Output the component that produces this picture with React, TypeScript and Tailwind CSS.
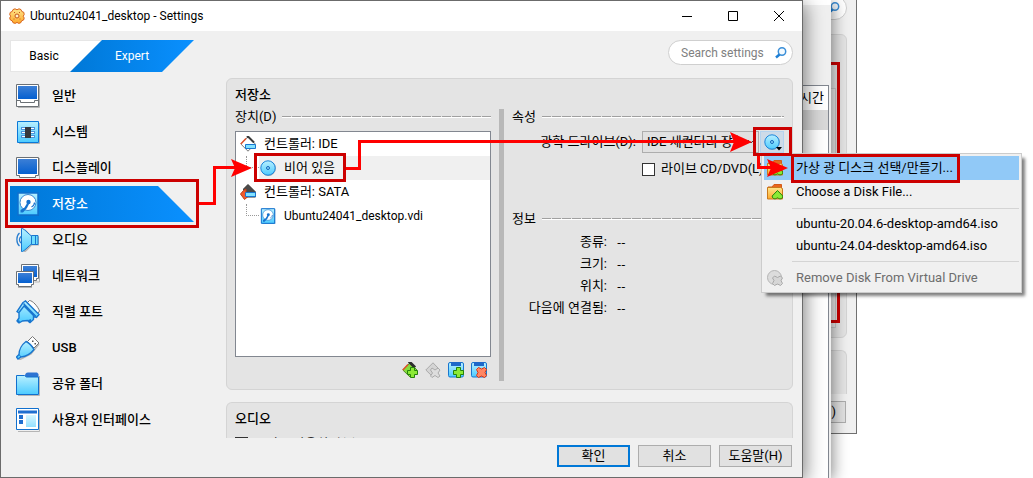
import type { ReactNode } from 'react';

const sideItems = [
  { label: '일반', icon: <MonitorIcon stand /> },
  { label: '시스템', icon: <ChipIcon /> },
  { label: '디스플레이', icon: <MonitorIcon /> },
  { label: '저장소', icon: <DiskIcon />, active: true },
  { label: '오디오', icon: <SpeakerIcon /> },
  { label: '네트워크', icon: <NetworkIcon /> },
  { label: '직렬 포트', icon: <SerialIcon /> },
  { label: 'USB', icon: <UsbIcon /> },
  { label: '공유 폴더', icon: <FolderIcon /> },
  { label: '사용자 인터페이스', icon: <LayoutIcon /> },
];

const info = ['종류:', '크기:', '위치:', '다음에 연결됨:'];

function Svg({ size = 24, children }: { size?: number; children: ReactNode }) {
  return (
    <svg width={size} height={size} viewBox={`0 0 ${size} ${size}`} fill="none" className="shrink-0" aria-hidden="true">
      {children}
    </svg>
  );
}

/* Sidebar icons, 24px */

function MonitorIcon({ stand }: { stand?: boolean }) {
  return (
    <Svg>
      <path d="M2 23.500h21.500V2" stroke="#b5b5b5" />
      {stand ? (
        <>
          <path d="M.5.5h22v22H.5z" fill="#fff" stroke="#6b7075" />
          <path d="M.5 16.500h4v2h14v-2h4" stroke="#6b7075" />
          <path d="M2 2h19v13H2z" fill="url(#screen)" />
        </>
      ) : (
        <>
          <path d="M.5 1.500h22v18h-3v2h-16v-2h-3z" fill="#fff" stroke="#6b7075" />
          <path d="M2 3h19v15H2z" fill="url(#screen)" />
        </>
      )}
    </Svg>
  );
}

function ChipIcon() {
  return (
    <Svg>
      <path d="M3 23.500h20.500V3" stroke="#b5b5b5" />
      <path d="M1.500 1.500h21v21h-21z" fill="url(#sky)" stroke="#0a78d8" />
      <path d="M5 7h4v3H5zM5 11h4v3H5zM5 15h4v3H5zM15 7h4v3h-4zM15 11h4v3h-4zM15 15h4v3h-4z" fill="#4a94dc" />
      <path d="M6 8h3v1H6zM6 12h3v1H6zM6 16h3v1H6zM15 8h3v1h-3zM15 12h3v1h-3zM15 16h3v1h-3z" fill="#fff" />
      <path d="M9 7h6v11H9z" fill="#36383c" />
    </Svg>
  );
}

function DiskIcon({ size = 24 }: { size?: number }) {
  return (
    <svg width={size} height={size} viewBox="0 0 24 24" fill="none" className="shrink-0" aria-hidden="true">
      <path d="M4 2h19v22H4z" fill="#0757a8" opacity=".5" />
      <path d="M2 1h20v22H2z" fill="url(#sky)" stroke="#1170ce" strokeWidth="1.500" />
      <circle cx="12" cy="10.500" r="8" fill="#fff" stroke="#3587d2" />
      <path d="M15.500 15c2-1 3-2.500 3-4.500" stroke="#1672cf" strokeWidth="1.200" />
      <circle cx="12.500" cy="10" r="2.200" fill="#1672cf" />
      <path d="m13.500 11-2.500 5-4 4.500H4.500V18l4-2.500 3-5z" fill="#1672cf" />
    </svg>
  );
}

function SpeakerIcon() {
  return (
    <Svg>
      <path d="M3.500 5C0 8 0 15 3.500 18M5 8.500c-2 2-2 4.500 0 6.500" stroke="#2a7fd0" strokeWidth="1.300" />
      <path d="M6.500 1h2c3 2.500 4.500 5.500 6.500 7h7v9h-7c-2 1.500-4 5-6.500 6.500h-2z" transform="translate(1 .5)" fill="#b5b5b5" />
      <path d="M5.500.5h1c3 1.500 6 5.500 9 7.500v8c-3 2-6 6-9 7.500h-1z" fill="url(#sky)" stroke="#1976cf" />
      <path d="M15.500 7.500h6.500v9h-6.500z" fill="#6fdcfc" stroke="#1976cf" />
      <path d="M19.500 8v8" stroke="#1976cf" />
    </Svg>
  );
}

function NetworkIcon() {
  return (
    <Svg>
      <path d="M23.500 3v15h-5M2 23.500h14" stroke="#b5b5b5" />
      <path d="M5.500.5h17v14h-2v2h-13v-2h-2z" fill="#fff" stroke="#6b7075" />
      <path d="M7 2h14v11H7z" fill="url(#screen)" />
      <path d="M.5 7.500h17v13h-2v2h-13v-2h-2z" fill="#fff" stroke="#6b7075" />
      <path d="M2 9h14v10H2z" fill="url(#screen)" />
    </Svg>
  );
}

function SerialIcon() {
  return (
    <Svg>
      <path d="m11 3 2.500-2.500c3 0 8.500 6 10 10.500l-3 4z" fill="#fff" stroke="#777" />
      <path d="M7 2.500 9.500 1 23 14.500l-2.500 3-3-1v3l-3.500 3-2.500-2-5 .5-3.500 2-2-2 2-3L3 13 1 11.500z" fill="url(#sky)" stroke="#1976cf" strokeWidth="1.400" />
      <path d="M7.500 3.500 20 16.500M3 12.500 8 6l10 10" stroke="#1976cf" strokeWidth="1.400" />
      <path d="m1 21 2-1 1 2-2 1zM12 20l3-1v3l-2 1z" fill="#1976cf" />
    </Svg>
  );
}

function UsbIcon() {
  return (
    <Svg>
      <path d="m3 24 12-6 8-10" stroke="#b5b5b5" strokeWidth="1.500" />
      <path d="m11.500 5.500 5-5 6.500 6.500-5 5z" fill="#fff" stroke="#777" />
      <path d="M16 4.500h1.500V6H16zM18.500 7H20v1.500h-1.500z" fill="#555" />
      <path d="M10 5.500c3 1.500 6 4.500 8 8-3 4-8 7-13 7.500l-3 2L.5 21 3 18.500C3 14 6 8.500 10 5.500z" fill="url(#sky)" stroke="#1976cf" strokeWidth="1.400" />
      <path d="m3 18.500 2 2.500" stroke="#1976cf" />
    </Svg>
  );
}

function FolderIcon() {
  return (
    <Svg>
      <path d="M2 23.500h21.500V4" stroke="#b5b5b5" />
      <path d="M9 4c0-2 1-3.500 3-3.500h9L22.500 2v4H9z" fill="#2d74d2" />
      <path d="M.5 3.500h8l2 1.500h12v17.500H.5z" fill="url(#sky)" stroke="#1170ce" />
    </Svg>
  );
}

function LayoutIcon() {
  return (
    <Svg>
      <path d="M2 23.500h21.500V2" stroke="#b5b5b5" />
      <path d="M.5.5h22v21H.5z" fill="#fff" stroke="#1170ce" />
      <path d="M2 2.500h19v3H2zM3 7h4v4H3zM3 12h4v4H3z" fill="#1f6fd0" />
      <path d="M10 7h10v12H10z" fill="url(#sky)" opacity=".6" />
    </Svg>
  );
}

/* Small icons, 16px */

function DiscIcon() {
  return (
    <Svg size={16}>
      <circle cx="8.500" cy="8.500" r="7.400" fill="#a9b0b6" />
      <circle cx="8" cy="8" r="7.200" fill="url(#sky)" stroke="#1a86dc" />
      <circle cx="8" cy="8" r="1.500" fill="#8fdcff" stroke="#1465b8" />
    </Svg>
  );
}

function ControllerIcon({ filled }: { filled?: boolean }) {
  return (
    <Svg size={16}>
      {filled ? (
        <>
          <path d="M8 .5 15.500 8v5H6L3.500 5z" fill="#4a4a4a" stroke="#333" />
          <path d="M3.500 6.500.5 10l4 5.500L8 12.500 6 9V5z" fill="#f25a2b" stroke="#b9401a" />
        </>
      ) : (
        <>
          <path d="M8 .8 15.300 8 8 15.200.8 8z" fill="#fff" stroke="#777" />
          <path d="M.8 8 6 2.500" stroke="#e0502a" strokeWidth="1.500" />
          <path d="m7 1.500 1-1 6 6" stroke="#3a3a3a" strokeWidth="2" />
        </>
      )}
      <path d="M5.500 8.500h10v4h-10z" fill="#83e2ff" stroke="#1976cf" />
    </Svg>
  );
}

function AddControllerIcon() {
  return (
    <Svg size={16}>
      <path d="M8 .8 15 8l-7 7L.8 8z" fill="#86dc3c" stroke="#4d8a27" />
      <path d="M.8 8 6 2.500" stroke="#e0502a" strokeWidth="1.500" />
      <path d="m7 1.500 1-1 5 5" stroke="#2d2d2d" strokeWidth="3" />
      <path d="M8.500 5.500h4v3h3v4h-3v3h-4v-3h-3v-4h3z" fill="#8bea35" stroke="#25830b" />
    </Svg>
  );
}

function RemoveControllerIcon() {
  return (
    <Svg size={16}>
      <path d="M8 .8 13 6l-5 9L.8 8z" fill="#d4d4d4" stroke="#aaa" />
      <path d="m7 6 3 2 3-2 2 2-2 3 2 3-2 1.500-3-2-3 2L5.500 14l2-3-2-3z" fill="#ddd" stroke="#aaa" />
    </Svg>
  );
}

function DriveIcon({ remove }: { remove?: boolean }) {
  return (
    <Svg size={16}>
      <rect x=".5" y=".5" width="15" height="14.500" rx="1.500" fill="url(#sky)" stroke="#1976cf" />
      <path d="M3 0h10v4H3z" fill="#1f68c9" />
      {remove ? (
        <path d="m7.500 5.500 3 1.500 3-1.500 2 2-1.500 3 1.500 3-2 2-3-1.500-3 1.500-2-2 1.500-3-1.500-3z" fill="#ff8663" stroke="#dc3614" />
      ) : (
        <path d="M8.500 5.500h4v3h3v4h-3v3h-4v-3h-3v-4h3z" fill="#8bea35" stroke="#25830b" />
      )}
    </Svg>
  );
}

function OpenDiskIcon() {
  return (
    <Svg size={16}>
      <path d="M1 3h4l2-2.500h7.500V5H1z" fill="#e9671e" stroke="#d35a17" />
      <path d="M.5 3.500h13l2 1V15H.5z" fill="url(#amber)" stroke="#c9791c" />
      <path d="m10.500 6.500 5.300 5.500c0 3-3 3.500-5.300 1.800-2.300 1.700-5.300 1.200-5.300-1.800z" fill="#8bea35" stroke="#25830b" />
    </Svg>
  );
}

function RemoveDiskIcon() {
  return (
    <Svg size={16}>
      <circle cx="7.500" cy="7.500" r="7" fill="#dcdcdc" stroke="#b5b5b5" />
      <path d="m7.500 6 3 1.500 3-1.500 2 2-1.500 2.500 1.500 3-2 2-3-1.500-3 1.500-2-2 1.500-3L5.500 8z" fill="#d6d6d6" stroke="#a9a9a9" />
    </Svg>
  );
}

function SearchIcon() {
  return (
    <Svg size={12}>
      <circle cx="7" cy="4.500" r="3.700" fill="#f3faff" stroke="#3b8fd8" strokeWidth="1.500" />
      <path d="M4.500 7.500 1 10.500" stroke="#1f80d6" strokeWidth="2.500" />
    </Svg>
  );
}

function GearIcon() {
  return (
    <Svg size={16}>
      <path
        d="m6 .8 2 1 2-1 2 .8.800 1.900 2 .8.400 2.200-1 1.700 1 1.800-.6 2-2 .8-.8 1.900-2 .7-1.800-1-1.800 1-2.200-.7-.8-1.900-1.800-.8-.7-2 1-1.800-1-1.700.6-2.200 1.900-.8.800-1.900z"
        fill="url(#amber)"
        stroke="#d8641c"
      />
      <circle cx="8" cy="8" r="2" fill="#fff0c8" stroke="#c4561c" />
      <path d="M5 4.500h1M10 4.500h1M4.500 11h1M10.500 11h1" stroke="#c4561c" />
    </Svg>
  );
}

function Gradients() {
  return (
    <svg width="0" height="0" className="absolute" aria-hidden="true">
      <defs>
        <linearGradient id="sky" x2="0" y2="1">
          <stop stopColor="#b9f0ff" />
          <stop offset="1" stopColor="#4ccbff" />
        </linearGradient>
        <linearGradient id="screen" x2="0" y2="1">
          <stop stopColor="#3c7fd6" />
          <stop offset="1" stopColor="#0560d0" />
        </linearGradient>
        <linearGradient id="amber" x2="0" y2="1">
          <stop stopColor="#ffe58a" />
          <stop offset="1" stopColor="#fda92c" />
        </linearGradient>
      </defs>
    </svg>
  );
}

function GroupTitle({ children }: { children: ReactNode }) {
  return (
    <div className="flex h-4 items-center gap-[6px]">
      <h3 className="shrink-0">{children}</h3>
      <div className="h-[2px] flex-1 border-b border-white bg-[repeating-linear-gradient(90deg,#a0a0a0_0_9px,#e4e4e4_9px_10px)]" />
    </div>
  );
}

function DriveMenu() {
  return (
    <div
      role="menu"
      className="absolute top-full left-px z-10 flex w-[261px] flex-col border border-[#ccc] bg-[#f0f0f0] p-[2px] text-left shadow-[4px_4px_3px_-1px_rgba(0,0,0,0.5)]"
    >
      <button role="menuitem" className="flex h-6 items-center gap-[13px] bg-[#91c9f7] pl-[3px] text-[13px]">
        <OpenDiskIcon />
        가상 광 디스크 선택/만들기...
      </button>
      <button role="menuitem" className="flex h-6 items-center gap-[13px] pl-[3px]">
        <OpenDiskIcon />
        Choose a Disk File...
      </button>
      <hr className="my-1 ml-7 border-[#d4d4d4]" />
      <button role="menuitem" className="h-[22px] pl-8 text-left">ubuntu-20.04.6-desktop-amd64.iso</button>
      <button role="menuitem" className="h-[22px] pl-8 text-left">ubuntu-24.04-desktop-amd64.iso</button>
      <hr className="my-1 ml-7 border-[#d4d4d4]" />
      <button role="menuitem" disabled className="flex h-6 items-center gap-[13px] pl-[3px] text-[#6d6d6d]">
        <RemoveDiskIcon />
        Remove Disk From Virtual Drive
      </button>
    </div>
  );
}

function Sidebar() {
  return (
    <nav className="w-[216px] shrink-0 text-[13px] font-medium">
      {sideItems.map((item) => (
        <button
          key={item.label}
          className={
            item.active
              ? 'flex h-9 w-[184px] items-center gap-3 bg-gradient-to-r from-[#0078d7] to-[#0a90ff] pl-[6px] text-white [clip-path:polygon(0_0,148px_0,100%_100%,0_100%)]'
              : 'flex h-9 w-[184px] items-center gap-3 pl-[6px]'
          }
        >
          {item.icon}
          {item.label}
        </button>
      ))}
    </nav>
  );
}

function DeviceTree() {
  return (
    <section className="w-[256px] shrink-0 pb-[3px]">
      <GroupTitle>장치(D)</GroupTitle>
      <ul className="mt-[6px] h-[226px] border border-[#828790] bg-white">
        <li className="flex h-6 items-center gap-2 pl-1">
          <ControllerIcon />
          컨트롤러: IDE
        </li>
        <li className="flex h-6 items-center">
          <span className="ml-[10px] h-3 w-[13px] self-start border-b border-l border-dotted border-[#999]" />
          <span className="flex h-6 flex-1 items-center gap-2 bg-[#f0f0f0] pl-px">
            <DiscIcon />
            비어 있음
          </span>
        </li>
        <li className="flex h-6 items-center gap-2 pl-1">
          <ControllerIcon filled />
          컨트롤러: SATA
        </li>
        <li className="flex h-6 items-center">
          <span className="ml-[10px] h-3 w-[13px] self-start border-b border-l border-dotted border-[#999]" />
          <span className="flex flex-1 items-center gap-2 pl-px text-xs">
            <DiskIcon size={16} />
            Ubuntu24041_desktop.vdi
          </span>
        </li>
      </ul>
      <div className="mt-[5px] flex justify-end gap-[7px] pr-1">
        <button aria-label="컨트롤러 추가"><AddControllerIcon /></button>
        <button aria-label="컨트롤러 삭제" disabled><RemoveControllerIcon /></button>
        <button aria-label="연결 추가"><DriveIcon /></button>
        <button aria-label="연결 삭제"><DriveIcon remove /></button>
      </div>
    </section>
  );
}

function Attributes() {
  return (
    <section className="min-w-0 flex-1">
      <GroupTitle>속성</GroupTitle>
      <div className="mt-[6px] flex h-[22px] items-center">
        <label htmlFor="drive" className="w-[124px] shrink-0 text-right">광학 드라이브(D):</label>
        <div className="relative ml-[6px] min-w-0 flex-1">
          <select id="drive" className="h-[22px] w-full appearance-none border border-[#adadad] bg-[#e1e1e1] pr-5 pl-1">
            <option>IDE 세컨더리 장치 0</option>
          </select>
          <svg width="8" height="6" viewBox="0 0 8 6" fill="none" className="pointer-events-none absolute top-2 right-1">
            <path d="m1 1 3 3 3-3" stroke="#444" />
          </svg>
        </div>
        <div className="relative ml-px">
          <button aria-label="디스크 선택" className="flex h-[22px] w-6 items-center border border-[#b5d3ee] bg-[#cddbe8] pl-[3px]">
            <DiscIcon />
            <svg width="6" height="4" viewBox="0 0 6 4" className="-ml-1 mb-px self-end">
              <path d="M0 0h6L3 3.500z" />
            </svg>
          </button>
          <DriveMenu />
        </div>
      </div>
      <label className="mt-1 ml-[130px] flex h-6 w-[124px] items-center gap-[6px] whitespace-nowrap">
        <input type="checkbox" className="size-[13px] appearance-none border border-[#333] bg-white" />
        라이브 CD/DVD(L)
      </label>
      <div className="mt-[30px]">
        <GroupTitle>정보</GroupTitle>
      </div>
      <dl className="mt-1">
        {info.map((name) => (
          <div key={name} className="flex h-[22px] items-center gap-[10px]">
            <dt className="w-[95px] text-right">{name}</dt>
            <dd className="font-['Open_Sans',sans-serif]">--</dd>
          </div>
        ))}
      </dl>
    </section>
  );
}

function SettingsDialog() {
  return (
    <main className="relative flex h-full flex-col border border-[#6b6b6b] bg-[#f0f0f0] shadow-[2px_4px_18px_rgba(0,0,0,0.5)]">
      <header className="flex h-[30px] shrink-0 items-center bg-white pr-[18px] pl-2">
        <GearIcon />
        <h1 className="ml-[5px]">Ubuntu24041_desktop - Settings</h1>
        <div className="ml-auto flex gap-9">
          <button aria-label="Minimize">
            <svg width="10" height="10" stroke="#000"><path d="M0 5.500h10" /></svg>
          </button>
          <button aria-label="Maximize">
            <svg width="10" height="10" stroke="#000" fill="none"><path d="M.5.5h9v9h-9z" /></svg>
          </button>
          <button aria-label="Close">
            <svg width="10" height="10" stroke="#000"><path d="m0 0 10 10M10 0 0 10" /></svg>
          </button>
        </div>
      </header>

      <div className="mt-[9px] flex shrink-0 items-start justify-between px-[9px]">
        <div className="flex h-8">
          <button className="w-[92px] border border-[#e6e6e6] bg-white pr-6 [clip-path:polygon(0_0,100%_0,60px_100%,0_100%)]">Basic</button>
          <button className="-ml-8 w-[124px] bg-gradient-to-r from-[#0078d7] to-[#0a90ff] text-white [clip-path:polygon(32px_0,100%_0,92px_100%,0_100%)]">
            Expert
          </button>
        </div>
        <label className="flex h-[25px] w-[125px] items-center rounded-full border border-[#cfcfcf] bg-white pr-[5px] pl-3">
          <input aria-label="Search settings" placeholder="Search settings" className="min-w-0 flex-1 outline-none placeholder:text-[#808080]" />
          <SearchIcon />
        </label>
      </div>

      <div className="mt-[6px] flex min-h-0 flex-1 px-[9px]">
        <Sidebar />
        <div className="flex min-w-0 flex-1 flex-col text-[13px]">
          <section className="relative z-10 shrink-0 rounded-md border border-[#d4d4d4] bg-[#e4e4e4] p-2">
            <h2 className="h-[22px] font-medium">저장소</h2>
            <div className="flex">
              <DeviceTree />
              <div className="mr-2 ml-2 w-[5px] shrink-0 bg-[#b8b8b8]" />
              <Attributes />
            </div>
          </section>
          <section className="mt-3 min-h-0 flex-1 overflow-hidden rounded-t-md border border-b-0 border-[#d4d4d4] bg-[#e4e4e4] px-2 pt-2">
            <h2 className="h-[22px] font-medium">오디오</h2>
            <label className="mt-1 flex h-[13px] items-center gap-[6px]">
              <input type="checkbox" className="size-[13px] appearance-none border border-[#333] bg-white" />
              오디오 사용하기(E)
            </label>
          </section>
        </div>
      </div>

      <footer className="flex shrink-0 justify-end gap-2 px-[10px] pt-[7px] pb-[10px] text-[13px]">
        <button className="h-[22px] w-[73px] border-2 border-[#0078d7] bg-[#e1e1e1]">확인</button>
        <button className="h-[22px] w-[73px] border border-[#adadad] bg-[#e1e1e1]">취소</button>
        <button className="h-[22px] w-[73px] border border-[#adadad] bg-[#e1e1e1]">도움말(H)</button>
      </footer>
    </main>
  );
}

/* Windows left open behind the dialog; only their right edges show */
function BackgroundWindows() {
  return (
    <>
      <div className="absolute top-0 right-[176px] h-[434px] w-[200px] border-r border-b border-[#707070] bg-[#f0f0f0]">
        <div className="absolute -top-1 right-[9px] flex h-6 w-[124px] items-center justify-end rounded-full border border-[#cfcfcf] bg-white pr-[6px]">
          <SearchIcon />
        </div>
        <div className="absolute top-[34px] right-[9px] h-[304px] w-40 rounded-md border border-[#d4d4d4] bg-[#e4e4e4]" />
        <div className="absolute top-[88px] right-5 h-[240px] w-32 border border-[#ccc] bg-[#ececec]" />
        <div className="absolute top-[62px] right-4 h-[261px] w-32 border-[3px] border-[#c00]" />
        <div className="absolute top-[350px] right-[9px] h-11 w-40 rounded-t-md border border-b-0 border-[#d4d4d4] bg-[#e4e4e4]" />
        <button className="absolute top-[401px] right-[10px] h-[22px] w-[73px] border border-[#adadad] bg-[#e1e1e1] pr-[9px] text-right text-[13px]">)</button>
      </div>
      <div className="absolute top-0 right-[202px] flex h-full w-[200px] flex-col bg-[#f0f0f0] pt-[5px] shadow-[2px_2px_14px_rgba(0,0,0,0.45)]">
        <div className="absolute inset-x-0 top-0 h-[5px] bg-white" />
        <div className="mt-20 mr-[2px] flex-1 border-t border-r border-[#828790] bg-white text-[13px]">
          <div className="flex h-6 items-center justify-end pr-1">시간</div>
          <div className="h-5 bg-[#d9d9d9]" />
        </div>
      </div>
    </>
  );
}

function Callouts() {
  return (
    <svg width="1033" height="478" fill="none" className="pointer-events-none absolute top-0 left-0 z-20" aria-hidden="true">
      <g stroke="#f00" strokeWidth="3">
        <path d="M199 203.500h15.500v-36H236" />
        <path d="M346 168.500h13.500v-27H735" />
        <path d="M758.500 155v12.500H771" />
      </g>
      <g fill="#f00">
        <path d="m252 168-21-9 4 9-4 9z" />
        <path d="m752 142-22-10 4 10-4 10z" />
        <path d="m788 168-21-9 4 9-4 9z" />
      </g>
      <g stroke="#c00" strokeWidth="3">
        <path d="M6.500 180.500h191v46H6.500z" />
        <path d="M255.500 154.500h89v26h-89z" />
        <path d="M754.500 128.500h36v26h-36z" />
        <path d="M792.500 155.500h166v26h-166z" />
      </g>
    </svg>
  );
}

export default function App() {
  return (
    <div className="relative h-screen overflow-hidden bg-white pr-[230px] font-['Roboto','Noto_Sans_CJK_KR',sans-serif] text-xs leading-4 text-black">
      <Gradients />
      <BackgroundWindows />
      <SettingsDialog />
      <Callouts />
    </div>
  );
}
